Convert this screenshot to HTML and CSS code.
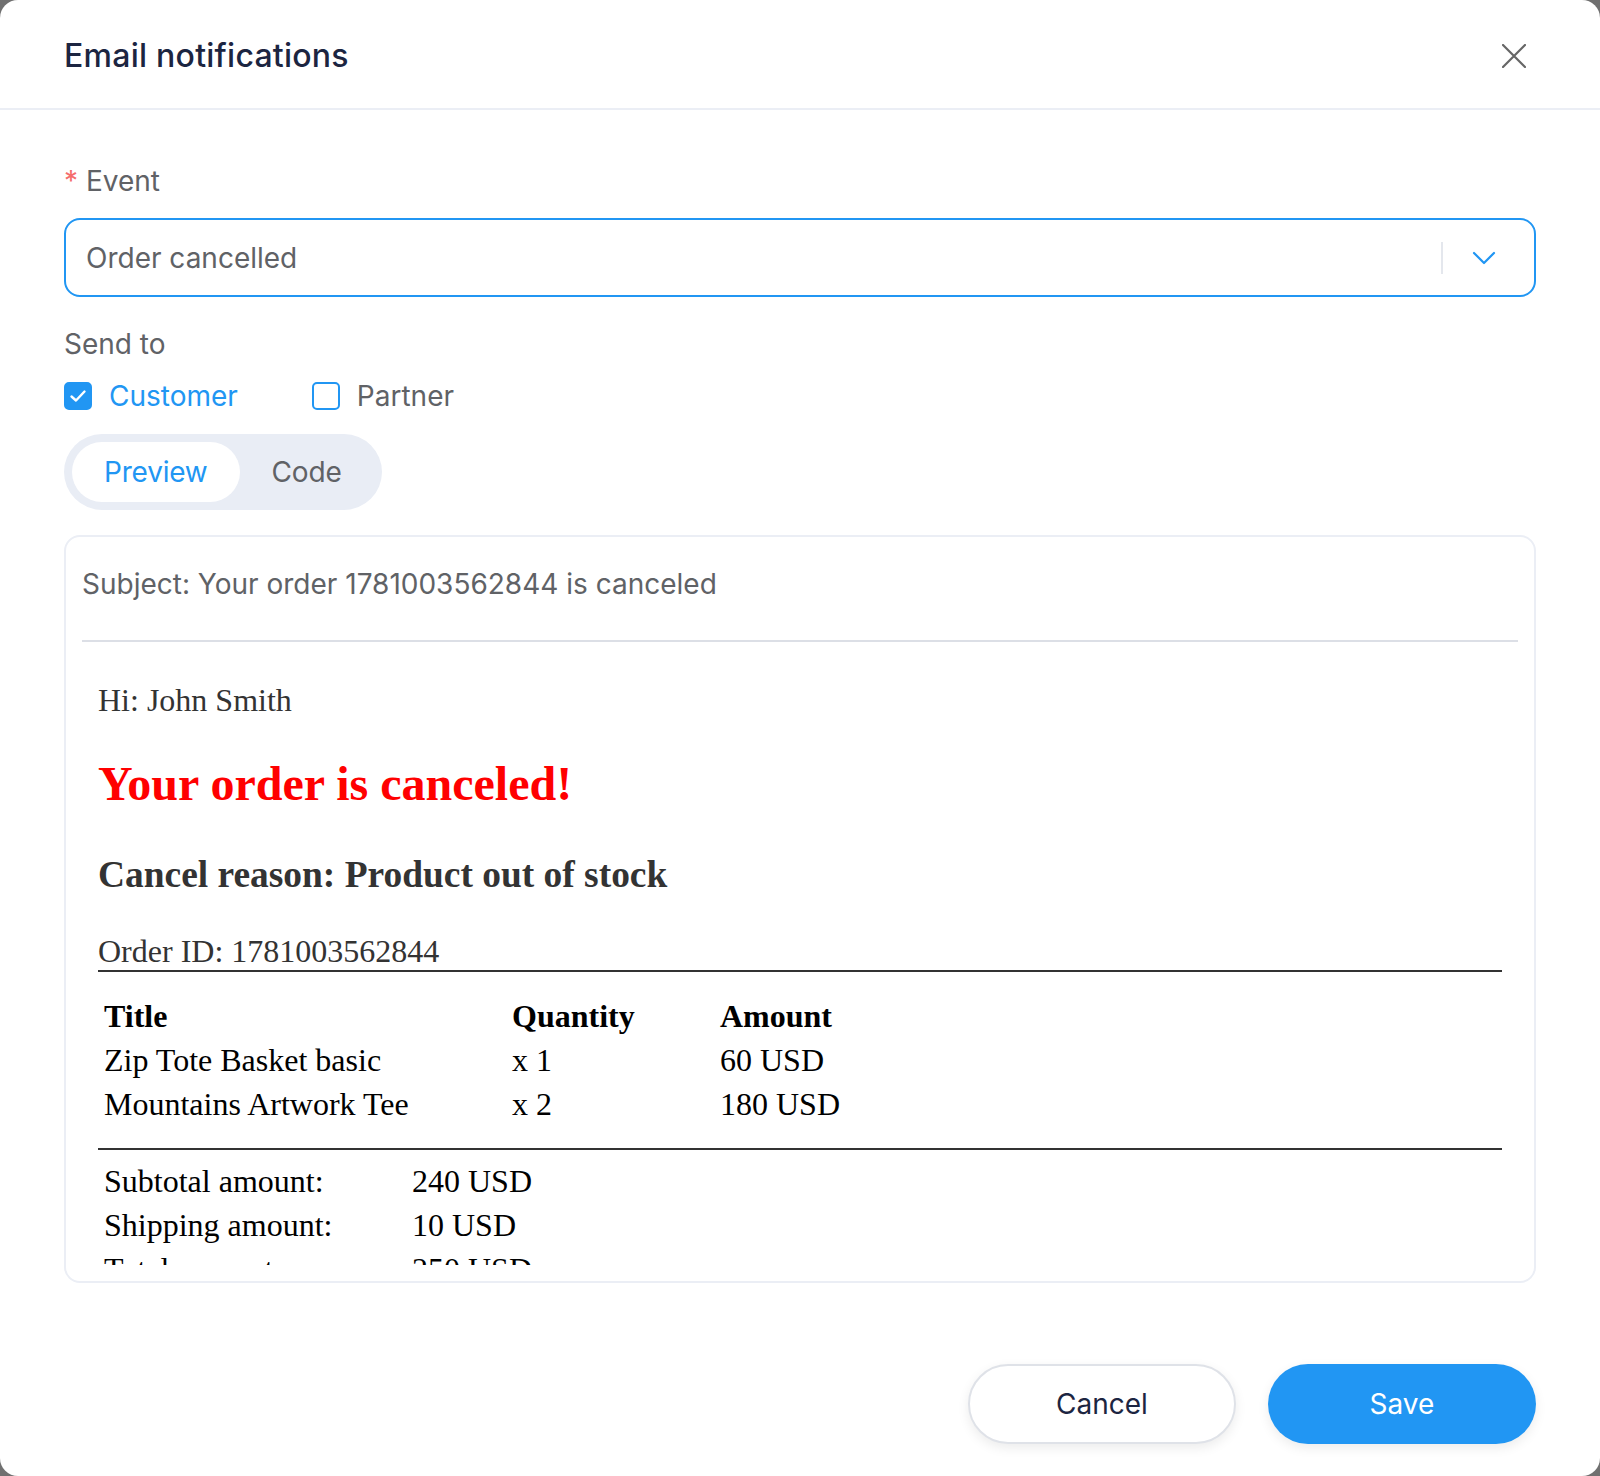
FILE: index.html
```html
<!DOCTYPE html>
<html lang="en">
<head>
  <meta charset="UTF-8">
  <meta name="viewport" content="width=device-width, initial-scale=1.0">
  <title>Email notifications</title>
  <link rel="stylesheet" href="styles.css">
</head>
<body>
  <div class="modal">
    <!-- Header -->
    <div class="modal-header">
      <h1 class="modal-title">Email notifications</h1>
      <button class="close-btn" aria-label="Close">
        <svg width="24" height="24" viewBox="0 0 24 24"><path d="M1 1L23 23M23 1L1 23" stroke="#666" stroke-width="2.2" stroke-linecap="round"/></svg>
      </button>
    </div>

    <!-- Form -->
    <div class="modal-body">
      <div class="field-label"><span class="required">*</span> Event</div>
      <div class="select">
        <span class="select-value">Order cancelled</span>
        <span class="select-divider"></span>
        <svg class="select-arrow" width="24" height="14" viewBox="0 0 24 14"><path d="M2 2L12 12L22 2" fill="none" stroke="#2196f3" stroke-width="2.2" stroke-linecap="round" stroke-linejoin="round"/></svg>
      </div>

      <div class="field-label send-label">Send to</div>
      <div class="checkbox-group">
        <label class="checkbox checked">
          <span class="checkbox-box">
            <svg width="28" height="28" viewBox="0 0 28 28"><path d="M7.5 14.5L12 18.5L20.5 9.5" fill="none" stroke="#fff" stroke-width="2.4" stroke-linecap="round" stroke-linejoin="round"/></svg>
          </span>
          Customer
        </label>
        <label class="checkbox">
          <span class="checkbox-box"></span>
          Partner
        </label>
      </div>

      <div class="tabs">
        <span class="tab active">Preview</span>
        <span class="tab">Code</span>
      </div>

      <!-- Email preview -->
      <div class="preview-card">
        <div class="subject">Subject: Your order 1781003562844 is canceled</div>
        <div class="mail">
          <p class="mail-text">Hi: John Smith</p>
          <h2 class="mail-title">Your order is canceled!</h2>
          <h3 class="mail-reason">Cancel reason: Product out of stock</h3>
          <div class="mail-order">Order ID: 1781003562844</div>
          <table class="mail-items">
            <tr>
              <th>Title</th>
              <th>Quantity</th>
              <th>Amount</th>
            </tr>
            <tr>
              <td>Zip Tote Basket basic</td>
              <td>x 1</td>
              <td>60 USD</td>
            </tr>
            <tr>
              <td>Mountains Artwork Tee</td>
              <td>x 2</td>
              <td>180 USD</td>
            </tr>
          </table>
          <div class="mail-totals">
            <table>
              <tr>
                <td>Subtotal amount:</td>
                <td>240 USD</td>
              </tr>
              <tr>
                <td>Shipping amount:</td>
                <td>10 USD</td>
              </tr>
              <tr>
                <td>Total amount:</td>
                <td>250 USD</td>
              </tr>
            </table>
          </div>
        </div>
      </div>
    </div>

    <!-- Footer -->
    <div class="modal-footer">
      <button class="button cancel">Cancel</button>
      <button class="button save">Save</button>
    </div>
  </div>
</body>
</html>
```

FILE: styles.css
```css
* {
  box-sizing: border-box;
}

body {
  margin: 0;
  background: #707070;
  font-family: 'Inter', 'Noto Sans', sans-serif;
}

.modal {
  width: 1600px;
  height: 1476px;
  background: #fff;
  border-radius: 18px;
  display: flex;
  flex-direction: column;
  overflow: hidden;
}

/* Header */
.modal-header {
  height: 110px;
  padding: 3px 74px 0 64px;
  border-bottom: 2px solid #ebeef5;
  display: flex;
  align-items: center;
  justify-content: space-between;
}

.modal-title {
  margin: 0;
  font-size: 32px;
  font-weight: 500;
  letter-spacing: 0.25px;
  color: #1c2541;
}

.close-btn {
  border: none;
  background: none;
  padding: 0;
  margin-top: 1px;
  display: flex;
  cursor: pointer;
}

/* Body */
.modal-body {
  flex: 1;
  display: flex;
  flex-direction: column;
  padding: 49px 64px 0;
  min-height: 0;
}

.field-label {
  font-size: 28px;
  line-height: 44px;
  color: #606266;
  margin-bottom: 15px;
}

.required {
  color: #f56c6c;
}

.select {
  height: 79px;
  border: 2px solid #2196f3;
  border-radius: 16px;
  display: flex;
  align-items: center;
  padding: 0 38px 0 20px;
}

.select-value {
  flex: 1;
  font-size: 28px;
  color: #606266;
}

.select-divider {
  width: 2px;
  height: 32px;
  background: #e4e7ed;
  margin-right: 29px;
}

.send-label {
  margin-top: 25px;
  margin-bottom: 8px;
}

.checkbox-group {
  display: flex;
  align-items: center;
  height: 44px;
  gap: 74px;
}

.checkbox {
  display: flex;
  align-items: center;
  gap: 17px;
  font-size: 28px;
  color: #606266;
}

.checkbox.checked {
  color: #2196f3;
}

.checkbox-box {
  width: 28px;
  height: 28px;
  border: 2px solid #2196f3;
  border-radius: 5px;
  display: flex;
  align-items: center;
  justify-content: center;
}

.checkbox.checked .checkbox-box {
  background: #2196f3;
}

.checkbox-box svg {
  flex: none;
}

.tabs {
  align-self: flex-start;
  display: flex;
  margin-top: 16px;
  padding: 8px;
  background: #e9edf5;
  border-radius: 38px;
}

.tab {
  height: 60px;
  line-height: 60px;
  padding: 0 32px;
  border-radius: 30px;
  font-size: 28px;
  letter-spacing: -0.2px;
  color: #606266;
}

.tab.active {
  background: #fff;
  color: #2196f3;
}

/* Preview card */
.preview-card {
  flex: 1;
  min-height: 0;
  margin-top: 25px;
  border: 2px solid #ebeef5;
  border-radius: 16px;
  padding: 16px;
  display: flex;
  flex-direction: column;
}

.subject {
  padding: 9px 0 34px;
  font-size: 28px;
  line-height: 44px;
  color: #606266;
  border-bottom: 2px solid #dcdfe6;
}

.mail {
  flex: 1;
  min-height: 0;
  overflow: hidden;
  padding: 8px 16px 0;
  font-family: 'Liberation Serif', 'Times New Roman', serif;
  font-size: 32px;
  color: #333;
}

.mail-text {
  margin: 32px 0;
}

.mail-title {
  margin: 37px 0 41.84px;
  font-size: 48px;
  color: #f00;
}

.mail-reason {
  margin: 37.44px 0 37px;
  font-size: 37.44px;
}

.mail-order {
  border-bottom: 2px solid #333;
}

.mail table {
  border-spacing: 4px;
  font-size: 32px;
  line-height: 36px;
  color: #000;
}

.mail th,
.mail td {
  padding: 2px;
  text-align: left;
}

.mail-items {
  margin: 20px 0 20px;
}

.mail-items th:nth-child(1) {
  width: 404px;
}

.mail-items th:nth-child(2) {
  width: 204px;
}

.mail-totals {
  border-top: 2px solid #333;
  padding-top: 7px;
}

.mail-totals td:first-child {
  width: 304px;
}

/* Footer */
.modal-footer {
  display: flex;
  justify-content: flex-end;
  gap: 32px;
  padding: 81px 64px 32px;
}

.button {
  width: 268px;
  height: 80px;
  border-radius: 40px;
  font-family: 'Inter', 'Noto Sans', sans-serif;
  font-size: 28px;
  cursor: pointer;
  box-shadow: 0 4px 12px rgba(0, 0, 0, 0.08);
}

.button.cancel {
  background: #fff;
  border: 2px solid #dfe2e8;
  color: #1c2541;
}

.button.save {
  background: #2196f3;
  border: none;
  color: #fff;
}
```
